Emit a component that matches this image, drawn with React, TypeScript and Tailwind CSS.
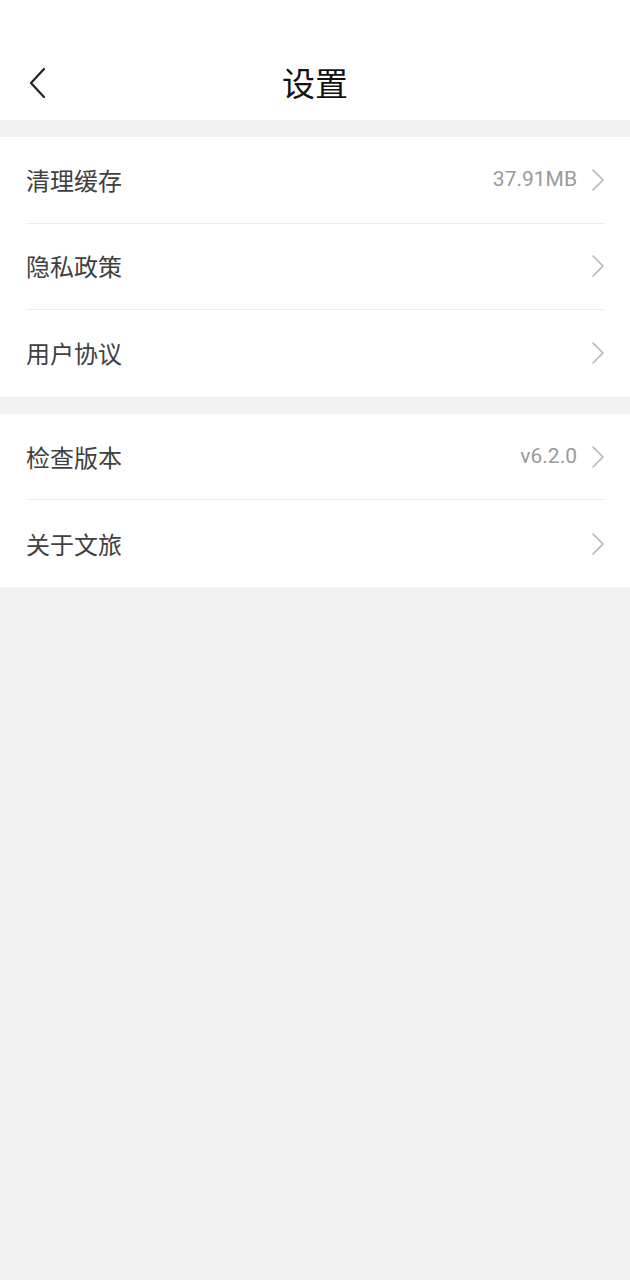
const font = { fontFamily: '"Noto Sans CJK SC", "Noto Sans", sans-serif' }

type Row = { label: string; value?: string }

const groups: Row[][] = [
  [{ label: '清理缓存', value: '37.91MB' }, { label: '隐私政策' }, { label: '用户协议' }],
  [{ label: '检查版本', value: 'v6.2.0' }, { label: '关于文旅' }],
]

function Chevron() {
  return (
    <svg width="14" height="24" viewBox="0 0 14 24" fill="none" className="shrink-0">
      <path d="M2 2 L12 12 L2 22" stroke="#b5b5b5" strokeWidth="1.6" strokeLinecap="round" strokeLinejoin="round" />
    </svg>
  )
}

function SettingRow({ row, last }: { row: Row; last: boolean }) {
  return (
    <div className="pl-[26px] pr-[25px]">
      <div className={`h-[86.6px] flex items-center justify-between ${last ? '' : 'border-b border-[#ececec]'}`}>
        <span className="text-[24px] text-[#404040] leading-none">{row.label}</span>
        <div className="flex items-center gap-[14px]">
          {row.value && (
            <span className="text-[21px] text-[#9a9a9a] leading-none font-['Roboto',sans-serif]">{row.value}</span>
          )}
          <Chevron />
        </div>
      </div>
    </div>
  )
}

export default function App() {
  return (
    <div className="min-h-screen bg-[#f1f1f1] flex flex-col" style={font}>
      <div className="h-[120px] bg-white relative flex items-end justify-center pb-[21px]">
        <svg
          width="20"
          height="32"
          viewBox="0 0 20 32"
          fill="none"
          className="absolute left-[28px] top-[67px]"
        >
          <path d="M16 2 L3 16 L16 30" stroke="#222" strokeWidth="2.2" strokeLinecap="round" strokeLinejoin="round" />
        </svg>
        <span className="text-[33px] text-[#111] leading-none">设置</span>
      </div>
      {groups.map((g, i) => (
        <div key={i} className="mt-[17px] bg-white">
          {g.map((row, j) => (
            <SettingRow key={row.label} row={row} last={j === g.length - 1} />
          ))}
        </div>
      ))}
    </div>
  )
}
